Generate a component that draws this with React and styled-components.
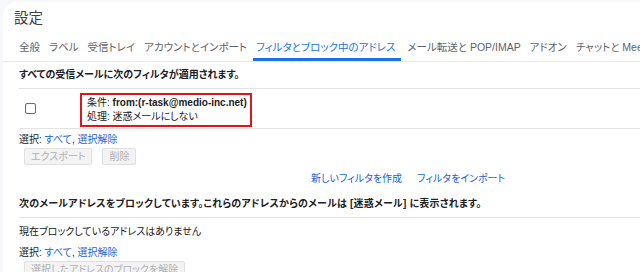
import React from "react";
import styled, { createGlobalStyle } from "styled-components";

const Global = createGlobalStyle`
  html, body { margin: 0; padding: 0; background: #f6f8fc; }
  body {
    font-family: "Liberation Sans", Arial, "Noto Sans CJK JP", sans-serif;
    font-feature-settings: "palt";
    color: #202124;
    font-size: 10px;
  }
`;

const Page = styled.div`
  width: 640px;
  height: 272px;
  overflow: hidden;
  padding: 2px 0 0 3px;
  box-sizing: border-box;
`;

const Panel = styled.div`
  background: #fff;
  border-top-left-radius: 14px;
  height: 100%;
  display: flex;
  flex-direction: column;
  & > * { flex-shrink: 0; }
`;

const Title = styled.h1`
  margin: 0;
  padding: 7px 0 0 11px;
  height: 28px;
  box-sizing: border-box;
  font-size: 14.5px;
  font-weight: 400;
  color: #3c4043;
  line-height: 18px;
`;

const Tabs = styled.div`
  display: flex;
  padding-left: 13px;
  border-bottom: 1px solid #e8eaed;
  height: 32px;
  box-sizing: border-box;
  overflow: hidden;
  white-space: nowrap;
`;

const Tab = styled.div`
  padding: 11px ${(p) => (p.$active ? 6 : 3)}px 0 3px;
  margin-right: 3px;
  font-size: 10.5px;
  line-height: 13px;
  color: ${(p) => (p.$active ? "#1a73e8" : "#5f6368")};
  border-bottom: 3px solid ${(p) => (p.$active ? "#1a73e8" : "transparent")};
  box-sizing: border-box;
  flex-shrink: 0;
`;

const Content = styled.div`
  padding-left: 16px;
  display: flex;
  flex-direction: column;
  & > * { flex-shrink: 0; }
`;

const Heading = styled.div`
  font-weight: 700;
  font-size: 10px;
  line-height: 13px;
  padding: 6px 0 7px;
  border-bottom: 1px solid #e3e3e3;
  white-space: nowrap;
`;

const FilterRow = styled.div`
  display: flex;
  align-items: center;
  height: 40px;
  border-bottom: 1px solid #e3e3e3;
  box-sizing: border-box;
`;

const CheckCell = styled.div`
  width: 61px;
  display: flex;
  padding-left: 6px;
  box-sizing: border-box;
`;

const Check = styled.span`
  width: 9px;
  height: 9px;
  border: 1px solid #6b6b6b;
  border-radius: 2px;
  display: block;
`;

const Highlight = styled.div`
  border: 2px solid #e0141b;
  padding: 1px 3px 2px 5px;
  margin-top: 3px;
  min-width: 170px;
  height: 34px;
  box-sizing: border-box;
  line-height: 14px;
  font-size: 10px;
  color: #202124;
  white-space: nowrap;
`;

const Strong = styled.span`
  font-weight: 700;
`;

const SelectLine = styled.div`
  padding-top: ${(p) => p.$top || 4}px;
  line-height: 13px;
  font-size: 10px;
  color: #202124;
`;

const Link = styled.span`
  color: #1a62d6;
`;

const Buttons = styled.div`
  display: flex;
  gap: 10px;
  padding: 2px 0 0 5px;
`;

const Button = styled.div`
  height: 17px;
  box-sizing: border-box;
  padding: 0 6px;
  border: 1px solid #e0e0e0;
  background: #f3f3f3;
  color: #b0b0b0;
  border-radius: 2px;
  font-size: 10px;
  line-height: 15px;
  white-space: nowrap;
`;

const Actions = styled.div`
  display: flex;
  gap: 15px;
  padding: 7px 0 0 292px;
  line-height: 13px;
  font-size: 10px;
`;

const BlockHeading = styled(Heading)`
  margin-top: 6px;
  letter-spacing: 0.2px;
`;

const Empty = styled.div`
  padding-top: 7px;
  line-height: 13px;
  font-size: 10px;
`;

export default function App() {
  const tabs = [
    "全般",
    "ラベル",
    "受信トレイ",
    "アカウントとインポート",
    "フィルタとブロック中のアドレス",
    "メール転送と POP/IMAP",
    "アドオン",
    "チャットと Meet",
  ];
  return (
    <Page>
      <Global />
      <Panel>
        <Title>設定</Title>
        <Tabs>
          {tabs.map((t, i) => (
            <Tab key={t} $active={i === 4}>
              {t}
            </Tab>
          ))}
        </Tabs>
        <Content>
          <Heading>すべての受信メールに次のフィルタが適用されます。</Heading>
          <FilterRow>
            <CheckCell>
              <Check />
            </CheckCell>
            <Highlight>
              <div>
                条件: <Strong>from:(r-task@medio-inc.net)</Strong>
              </div>
              <div>処理: 迷惑メールにしない</div>
            </Highlight>
          </FilterRow>
          <SelectLine $top={4}>
            選択: <Link>すべて</Link>, <Link>選択解除</Link>
          </SelectLine>
          <Buttons>
            <Button>エクスポート</Button>
            <Button>削除</Button>
          </Buttons>
          <Actions>
            <Link>新しいフィルタを作成</Link>
            <Link>フィルタをインポート</Link>
          </Actions>
          <BlockHeading>
            次のメールアドレスをブロックしています。これらのアドレスからのメールは [迷惑メール] に表示されます。
          </BlockHeading>
          <Empty>現在ブロックしているアドレスはありません</Empty>
          <SelectLine $top={8}>
            選択: <Link>すべて</Link>, <Link>選択解除</Link>
          </SelectLine>
          <Buttons>
            <Button>選択したアドレスのブロックを解除</Button>
          </Buttons>
        </Content>
      </Panel>
    </Page>
  );
}
